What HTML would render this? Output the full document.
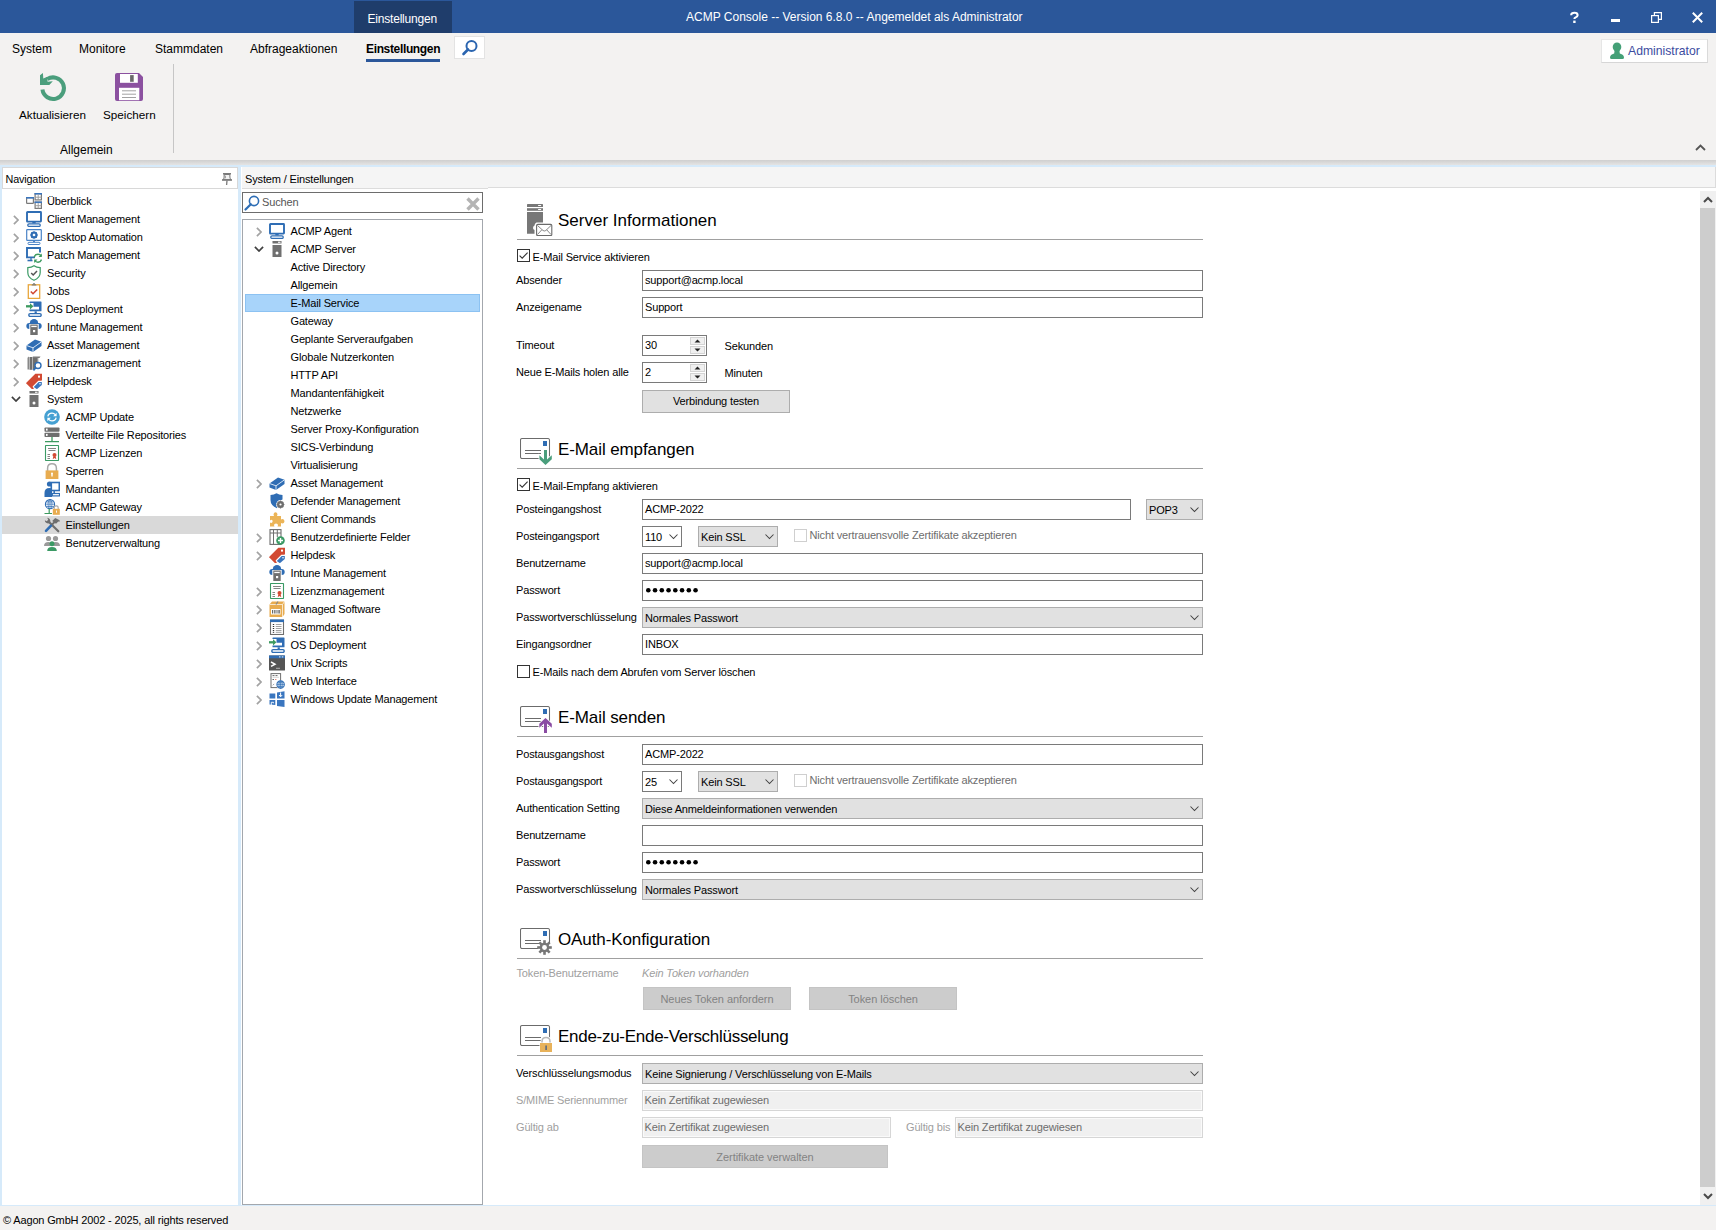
<!DOCTYPE html>
<html><head><meta charset="utf-8">
<style>
*{box-sizing:border-box;margin:0;padding:0}
html,body{width:1716px;height:1230px;overflow:hidden;background:#f3f2f1;font-family:"Liberation Sans",sans-serif;color:#000}
.a{position:absolute}
.t{position:absolute;font-size:11px;line-height:14px;white-space:nowrap;letter-spacing:-0.15px}
.m{position:absolute;font-size:12px;line-height:15px;white-space:nowrap}
.h{position:absolute;font-size:17px;line-height:20px;white-space:nowrap;letter-spacing:-0.1px}
.box{position:absolute;background:#fff;border:1px solid #7a7a7a}
.cmb{position:absolute;background:#e1e1e1;border:1px solid #adadad}
.ro{position:absolute;background:#f0f0f0;border:1px solid #d6d6d6;box-shadow:inset 0 0 0 1px #fafafa}
.btn{position:absolute;background:#e1e1e1;border:1px solid #adadad;text-align:center;font-size:11px;line-height:21px;letter-spacing:-0.15px}
.dbtn{position:absolute;background:#cccccc;border:1px solid #c4c4c4;text-align:center;font-size:11px;line-height:22px;color:#838383;letter-spacing:-0.05px}
.cb{position:absolute;width:13px;height:13px;border:1px solid #333;background:#fff}
.line{position:absolute;height:1px;background:#a0a0a0}
.chev{position:absolute;width:6px;height:6px;border-right:1px solid #404040;border-bottom:1px solid #404040;transform:rotate(45deg)}
svg{position:absolute;overflow:visible}
</style></head>
<body>
<svg width="0" height="0" style="position:absolute">
<defs>
<symbol id="i-overview" viewBox="0 0 16 16"><rect x="0.6" y="4.6" width="6.8" height="5.8" rx="0.6" fill="#fff" stroke="#7a7a7a" stroke-width="1.2"/><rect x="0" y="4" width="8" height="1.6" fill="#3a75bd"/><rect x="9.1" y="0.6" width="6.3" height="6.3" fill="#fff" stroke="#7a7a7a" stroke-width="1.2"/><rect x="8.5" y="0" width="7.5" height="1.6" fill="#3a75bd"/><path d="M12.2 1.5V7M9 4.2H15.5" stroke="#999" stroke-width="0.9"/><rect x="9.1" y="9.1" width="6.3" height="6.3" fill="#fff" stroke="#7a7a7a" stroke-width="1.2"/><rect x="8.5" y="8.5" width="7.5" height="1.6" fill="#3a75bd"/><path d="M12.2 10V15.5M9 12.7H15.5" stroke="#999" stroke-width="0.9"/></symbol>
<symbol id="i-monitor" viewBox="0 0 16 16"><rect x="1" y="1" width="14" height="9.6" rx="0.5" fill="none" stroke="#2f6db4" stroke-width="1.9"/><rect x="6.3" y="11" width="3.4" height="1.4" fill="#2f6db4"/><rect x="1.8" y="12.9" width="12.4" height="2.5" rx="1.2" fill="#fff" stroke="#2f6db4" stroke-width="1.3"/></symbol>
<symbol id="i-mongear" viewBox="0 0 16 16"><rect x="0.7" y="0.7" width="14.6" height="10.6" rx="0.6" fill="none" stroke="#4a83c6" stroke-width="1.2"/><circle cx="8" cy="6" r="2.6" fill="none" stroke="#2f6db4" stroke-width="1.8"/><path d="M8 2.2V9.8M4.2 6H11.8M5.3 3.3L10.7 8.7M10.7 3.3L5.3 8.7" stroke="#2f6db4" stroke-width="1.1"/><circle cx="8" cy="6" r="1.2" fill="#fff"/><rect x="7" y="11.5" width="2" height="1.5" fill="#4a83c6"/><rect x="2" y="13.3" width="12" height="2.2" rx="1" fill="none" stroke="#4a83c6" stroke-width="1"/></symbol>
<symbol id="i-monsync" viewBox="0 0 16 16"><path d="M9 10.4H1V1H14V5.5" fill="none" stroke="#2f6db4" stroke-width="1.9"/><path d="M1.5 13.5H6.5" stroke="#2f6db4" stroke-width="1.6"/><path d="M5 10.5V13" stroke="#2f6db4" stroke-width="1.3"/><path d="M8.2 10.3Q8.8 7.3 12 7.3Q14.2 7.3 15.2 9" fill="none" stroke="#3c9a5f" stroke-width="1.4"/><path d="M15.8 6.5V10H12.5Z" fill="#3c9a5f"/><path d="M15.5 12.5Q14.8 15.2 12 15.2Q9.8 15.2 8.8 13.7" fill="none" stroke="#3c9a5f" stroke-width="1.4"/><path d="M8.2 16V12.4H11.5Z" fill="#3c9a5f"/></symbol>
<symbol id="i-shield" viewBox="0 0 16 16"><path d="M8 0.8Q10.5 2.6 14.2 2.6V7.5Q14.2 12.8 8 15.3Q1.8 12.8 1.8 7.5V2.6Q5.5 2.6 8 0.8Z" fill="#fff" stroke="#3b9a65" stroke-width="1.2"/><path d="M5.2 8L7.2 10L11 6" fill="none" stroke="#555" stroke-width="1.5"/></symbol>
<symbol id="i-jobs" viewBox="0 0 16 16"><rect x="2.3" y="1.8" width="11.4" height="13.6" fill="#fff" stroke="#e8a63c" stroke-width="1.3"/><path d="M5.5 2.6H10.5L9.8 1.2H6.2Z" fill="#777"/><path d="M7 0.8H9" stroke="#777" stroke-width="1"/><path d="M4.8 8.5L7 10.7L11.2 6.5" fill="none" stroke="#d24a33" stroke-width="1.6"/></symbol>
<symbol id="i-osdeploy" viewBox="0 0 16 16"><rect x="3.5" y="0.5" width="12" height="9.8" rx="0.6" fill="#2f6db4"/><path d="M2.5 2V8.6H13V5.8H7.5V2Z" fill="#fff"/><rect x="8.6" y="10.3" width="2.2" height="2" fill="#2f6db4"/><rect x="2.8" y="12.6" width="12.4" height="2.8" rx="1.3" fill="#fff" stroke="#2f6db4" stroke-width="1.4"/><path d="M0 5.3H4.5" stroke="#3c9a5f" stroke-width="2.3"/><path d="M4 2.2L7.4 5.3L4 8.4Z" fill="#3c9a5f"/></symbol>
<symbol id="i-intune" viewBox="0 0 16 16"><circle cx="3.3" cy="7" r="3" fill="#2f6db4"/><circle cx="8" cy="4.3" r="4.2" fill="#2f6db4"/><circle cx="12.7" cy="7" r="3" fill="#2f6db4"/><rect x="3.3" y="5" width="9.4" height="11" fill="#fff"/><rect x="4.3" y="5.5" width="7.4" height="10.5" fill="#707070"/><rect x="5.3" y="6.8" width="5.4" height="1.3" fill="#fff"/><rect x="7" y="11" width="2.2" height="2.2" fill="#fff"/></symbol>
<symbol id="i-asset" viewBox="0 0 16 16"><path d="M0.5 8.5L9 2.5L15.5 4.8V9L7 15L0.5 12.6Z" fill="#2f6db4"/><path d="M0.5 8.5L7 10.8L15.5 4.8M7 10.8V15" fill="none" stroke="#e8f0fa" stroke-width="0.9"/></symbol>
<symbol id="i-lizenz" viewBox="0 0 16 16"><path d="M1.5 2.8L3 1.5V14.5H1.5Z" fill="#888"/><rect x="3.5" y="2" width="3" height="12.8" fill="#6e6e6e"/><path d="M6.8 1.5H14.5L13.5 3H6.8Z" fill="#7a7a7a"/><rect x="7" y="3" width="4.5" height="11" fill="#6e6e6e"/><path d="M11.8 3V8" stroke="#888" stroke-width="1"/><circle cx="12" cy="10.5" r="3" fill="#fff" stroke="#2f6db4" stroke-width="1.4"/><path d="M9.8 12.7L7.4 15.3" stroke="#2f6db4" stroke-width="1.8"/></symbol>
<symbol id="i-helpdesk" viewBox="0 0 16 16"><path d="M0.3 9.8L9.3 0.8H16V7.2L7.2 16H5.8L0.3 10.6Z" fill="#d24a33"/><rect x="12" y="2.6" width="2" height="2" fill="#fff"/><path d="M6.6 13.4L12.3 7.7H16.6V12.2L11 17L7 14.6Z" fill="#fff"/><path d="M7.8 13.9L12.7 9H15.8V11.9L10.9 16.2Z" fill="#3a75bd"/><circle cx="14" cy="10.7" r="0.8" fill="#fff"/></symbol>
<symbol id="i-server" viewBox="0 0 16 16"><rect x="3.5" y="0" width="9" height="2.6" rx="0.4" fill="#707070"/><rect x="9" y="0.7" width="2.5" height="1.1" fill="#fff"/><rect x="3.5" y="4" width="9" height="12" fill="#707070"/><circle cx="8" cy="12" r="1.5" fill="#fff"/></symbol>
<symbol id="i-update" viewBox="0 0 16 16"><circle cx="8" cy="8" r="7.8" fill="#45a0d2"/><path d="M3.9 7.4Q4.5 4.2 8 4.2Q10 4.2 11.2 5.6" fill="none" stroke="#fff" stroke-width="1.3"/><path d="M12.6 3.8V7.2H9.2Z" fill="#fff"/><path d="M12.1 8.6Q11.5 11.8 8 11.8Q6 11.8 4.8 10.4" fill="none" stroke="#fff" stroke-width="1.3"/><path d="M3.4 12.2V8.8H6.8Z" fill="#fff"/></symbol>
<symbol id="i-repo" viewBox="0 0 16 16"><rect x="0.5" y="0.5" width="15" height="4.2" rx="0.8" fill="#6e6e6e"/><rect x="2" y="1.6" width="1.6" height="2" fill="#fff"/><rect x="0.5" y="5.8" width="15" height="4.2" rx="0.8" fill="#6e6e6e"/><rect x="2" y="6.9" width="1.6" height="2" fill="#fff"/><path d="M8 10V14M1 14.6H15" stroke="#3c9a5f" stroke-width="1.3"/></symbol>
<symbol id="i-cert" viewBox="0 0 16 16"><rect x="1.5" y="0.5" width="13" height="15" rx="0.6" fill="#fff" stroke="#3b9a65" stroke-width="1.1"/><path d="M4 3.5H12M4.5 5.5H11.5M3.5 9.5H6M3.5 11.5H6M3.5 13.5H6" stroke="#777" stroke-width="0.9"/><circle cx="10.5" cy="10" r="2" fill="#d24a33"/><path d="M9.3 11.5L8.7 14.2L10.5 13L12.3 14.2L11.7 11.5" fill="#d24a33"/></symbol>
<symbol id="i-lock" viewBox="0 0 16 16"><path d="M3.6 8V5.2Q3.6 0.8 8 0.8Q12.4 0.8 12.4 5.2V8" fill="none" stroke="#a8a8a8" stroke-width="1.5"/><rect x="1.6" y="7.4" width="12.8" height="8.6" fill="#e8ac50"/><rect x="7.3" y="10.5" width="1.4" height="3" fill="#fff"/><circle cx="8" cy="10.5" r="1" fill="#fff"/></symbol>
<symbol id="i-mandant" viewBox="0 0 16 16"><circle cx="5.5" cy="3" r="2.6" fill="#2f6db4"/><path d="M0.5 16V12Q0.5 7 5.5 7Q7.5 7 8 8V16Z" fill="#2f6db4"/><rect x="7.3" y="1.5" width="8" height="8" fill="#fff" stroke="#2f6db4" stroke-width="1.6"/><path d="M10.2 9.5V12" stroke="#2f6db4" stroke-width="1.5"/><rect x="8.3" y="12.5" width="7.2" height="2.4" fill="#fff" stroke="#2f6db4" stroke-width="1.2"/></symbol>
<symbol id="i-gateway" viewBox="0 0 16 16"><circle cx="6" cy="5.2" r="4.6" fill="#fff" stroke="#2f6db4" stroke-width="1.1"/><path d="M1.4 5.2H10.6M6 0.6V9.8M2.2 2.9H9.8M2.2 7.5H9.8" stroke="#2f6db4" stroke-width="0.7"/><ellipse cx="6" cy="5.2" rx="2" ry="4.6" fill="none" stroke="#2f6db4" stroke-width="0.7"/><path d="M5.2 9.8V14.5M0.5 14.5H8" stroke="#3c9a5f" stroke-width="1.2"/><path d="M10.2 10V8.8Q10.2 6.9 12.2 6.9Q14.2 6.9 14.2 8.8V10" fill="none" stroke="#a8a8a8" stroke-width="1.1"/><rect x="8.8" y="9.8" width="7" height="6" fill="#e8ac50"/><rect x="12" y="11.5" width="0.9" height="2.2" fill="#fff"/></symbol>
<symbol id="i-tools" viewBox="0 0 16 16"><path d="M4.5 4.5L14.3 14.3" stroke="#6e6e6e" stroke-width="2.2" stroke-linecap="round"/><path d="M0.8 3.2A3.2 3.2 0 0 0 5.8 5.8A3.2 3.2 0 0 0 3.2 0.8L4.2 2.8L2.8 4.2Z" fill="#6e6e6e"/><path d="M8.2 4L11.2 1L15.6 3.2V4.8L14.3 4.6L12 6.8Z" fill="#6e6e6e"/><path d="M11 4.6L6.8 8.8" stroke="#6e6e6e" stroke-width="2"/><path d="M6.8 8.8L2 13.8" stroke="#2f6db4" stroke-width="2.6" stroke-linecap="round"/></symbol>
<symbol id="i-users" viewBox="0 0 16 16"><circle cx="4.5" cy="3.5" r="2.6" fill="#9a9a9a"/><path d="M0 11Q0 7 4.5 7Q7 7 8 8.5L6 11Z" fill="#9a9a9a"/><circle cx="11.5" cy="3.5" r="2.6" fill="#9a9a9a"/><path d="M16 11Q16 7 11.5 7Q9 7 8 8.5L10 11Z" fill="#9a9a9a"/><circle cx="8" cy="8.8" r="2.5" fill="#3b9a65"/><path d="M3.2 16Q3.2 12 8 12Q12.8 12 12.8 16Z" fill="#3b9a65"/></symbol>
<symbol id="i-defender" viewBox="0 0 16 16"><path d="M7.5 0.3Q10 2 13.5 2V6.5Q10 7.5 8.5 12Q9 14 8 15.2Q1.5 12.5 1.5 7V2Q5 2 7.5 0.3Z" fill="#2f6db4"/><circle cx="11.5" cy="11.5" r="4.4" fill="#fff"/><circle cx="11.5" cy="11.5" r="2.6" fill="none" stroke="#6e6e6e" stroke-width="1.8"/><path d="M11.5 7.6V15.4M7.6 11.5H15.4M8.8 8.8L14.2 14.2M14.2 8.8L8.8 14.2" stroke="#6e6e6e" stroke-width="1.2"/><circle cx="11.5" cy="11.5" r="1.1" fill="#fff"/></symbol>
<symbol id="i-puzzle" viewBox="0 0 16 16"><path d="M1 5H5Q4 3.5 5 2Q6.5 0.5 8 2Q9 3.5 8 5H12V8.5Q13.5 7.5 15 8.8Q16 10.5 15 11.8Q13.5 13 12 12V15.5H8.5Q9.5 14 8.5 13Q7 11.8 5.5 13Q4.5 14 5.5 15.5H1V11.5Q2.5 12.5 3.5 11Q4 9.5 3 9Q2 8.5 1 9.5Z" fill="#ebb457"/></symbol>
<symbol id="i-fields" viewBox="0 0 16 16"><rect x="1" y="0.6" width="11" height="14.8" fill="#fff" stroke="#6e6e6e" stroke-width="1.1"/><path d="M1 4H12M4.5 0.6V15.4M8.3 0.6V8" stroke="#6e6e6e" stroke-width="1"/><circle cx="11.5" cy="11.5" r="4.3" fill="#3b9a65"/><path d="M11.5 9V14M9 11.5H14" stroke="#fff" stroke-width="1.4"/></symbol>
<symbol id="i-package" viewBox="0 0 16 16"><path d="M0.5 3.5L3 0.5H15.5V13L13.5 16H0.5Z" fill="#e8ac50"/><path d="M13.5 3.5V16M0.5 3.5H13.5L15.5 0.5" fill="none" stroke="#fff" stroke-width="0.7"/><rect x="2" y="8" width="9.5" height="5.5" fill="#fff"/><path d="M3.5 9V12.5M5.3 9V12.5M7 9V12.5M9 9V12.5M10.3 9V12.5" stroke="#555" stroke-width="0.9"/><path d="M7 3.5L9 0.5" stroke="#888" stroke-width="1.2"/></symbol>
<symbol id="i-stamm" viewBox="0 0 16 16"><rect x="1.5" y="1.2" width="13" height="14.3" fill="#fff" stroke="#6e6e6e" stroke-width="1.1"/><rect x="1" y="0.5" width="14" height="2.6" fill="#2f6db4"/><path d="M3.8 5.5H5.2M3.8 7.5H5.2M3.8 9.5H5.2M3.8 11.5H5.2M3.8 13.3H5.2" stroke="#333" stroke-width="1"/><path d="M6.8 5.5H12.5M6.8 7.5H12.5M6.8 9.5H12.5M6.8 11.5H12.5M6.8 13.3H12.5" stroke="#999" stroke-width="0.9"/></symbol>
<symbol id="i-terminal" viewBox="0 0 16 16"><rect x="0" y="0.5" width="16" height="15" rx="0.6" fill="#555"/><rect x="0" y="0.5" width="16" height="2.8" fill="#2f6db4"/><path d="M10 1.9H11.5M12.8 1.9H14.3" stroke="#fff" stroke-width="0.9"/><path d="M2 7L6 9.2L2 11.4" fill="none" stroke="#fff" stroke-width="1.5"/><path d="M7 13.3H11" stroke="#aaa" stroke-width="1.1"/></symbol>
<symbol id="i-web" viewBox="0 0 16 16"><rect x="2" y="0.6" width="9.6" height="14" fill="#fff" stroke="#6e6e6e" stroke-width="1"/><path d="M3.5 2.6H5.5M6.5 2.6H8.5M3.5 6.5H5" stroke="#555" stroke-width="0.9"/><path d="M3.5 4.3H10" stroke="#bbb" stroke-width="0.6"/><path d="M6.3 6.5H7.3" stroke="#d24a33" stroke-width="0.9"/><path d="M3.8 12.3L5.2 10.9" stroke="#777" stroke-width="0.7"/><circle cx="11.6" cy="11.6" r="4.4" fill="#fff"/><circle cx="11.6" cy="11.6" r="3.7" fill="#fff" stroke="#2f6db4" stroke-width="1.1"/><path d="M8 11.6H15.2M11.6 8V15.2M8.6 9.8H14.6M8.6 13.4H14.6" stroke="#2f6db4" stroke-width="0.75"/><ellipse cx="11.6" cy="11.6" rx="1.7" ry="3.7" fill="none" stroke="#2f6db4" stroke-width="0.75"/></symbol>
<symbol id="i-windows" viewBox="0 0 16 16"><path d="M0.5 2.6L6.3 2.5V7.5H0.5Z" fill="#3a76bf"/><path d="M8 1.5L15.5 0.3V7.5H8Z" fill="#3a76bf"/><path d="M0.5 9H6.3V14L0.5 13.5Z" fill="#3a76bf"/><path d="M8 9H15.5V16L8 15Z" fill="#3a76bf"/><path d="M11.6 1.5V5.5M10 4L11.6 5.8L13.2 4" fill="none" stroke="#fff" stroke-width="1"/><path d="M2.3 14V11.3H4.5V12.3" fill="none" stroke="#fff" stroke-width="0.9"/></symbol>
<symbol id="chev-r" viewBox="0 0 6 10"><path d="M0.9 0.9L5 5L0.9 9.1" fill="none" stroke="#a3a3a3" stroke-width="1.7"/></symbol>
<symbol id="chev-d" viewBox="0 0 10 6"><path d="M0.9 0.9L5 5L9.1 0.9" fill="none" stroke="#404040" stroke-width="1.7"/></symbol>

<symbol id="s-server" viewBox="0 0 26 32"><rect x="0" y="0" width="16" height="3" rx="0.6" fill="#777"/><rect x="11" y="1" width="3.2" height="1.1" rx="0.5" fill="#fff"/><rect x="0" y="4.2" width="16" height="2.6" fill="#777"/><rect x="11" y="5" width="3.2" height="1" rx="0.5" fill="#fff"/><path d="M0 8H16V18.5H9.5Q7.5 19.5 7.5 21.5Q6 22 6 24Q6 25.5 7.5 26V29.8H0Z" fill="#777"/><rect x="9.6" y="20.4" width="15.2" height="11.2" rx="1.2" fill="#fff" stroke="#6a6a6a" stroke-width="1.1"/><path d="M10.5 21.5L16 26.5Q17.3 27.5 18.8 26.5L24 21.5M10.5 30.5L14.8 25.8M24 30.5L19.7 25.8" fill="none" stroke="#6a6a6a" stroke-width="0.8"/></symbol>
<symbol id="s-env" viewBox="0 0 32 28"><rect x="0.5" y="0.5" width="29" height="20" rx="1.6" fill="#fff" stroke="#6b6b6b" stroke-width="1.05"/><rect x="23" y="3" width="4" height="5" fill="#2f6db4"/><path d="M5 12.5H21M5 15.5H21" stroke="#6b6b6b" stroke-width="1.05"/></symbol>
</defs></svg>

<!-- TITLE BAR -->
<div class="a" style="left:0;top:0;width:1716px;height:33px;background:#2b579a"></div>
<div class="a" style="left:354px;top:1px;width:98px;height:32px;background:#1f3d6b"></div>
<div class="m" style="left:367.5px;top:12px;color:#fff;font-size:12px;letter-spacing:-0.2px">Einstellungen</div>
<div class="m" style="left:686px;top:9.5px;color:#fff">ACMP Console -- Version 6.8.0 -- Angemeldet als Administrator</div>
<!-- window controls -->
<svg style="left:1570px;top:12px" width="9" height="11" viewBox="0 0 9 11"><path d="M1.2 3.2Q1.2 0.8 4.4 0.8Q7.6 0.8 7.6 3.2Q7.6 4.6 5.6 5.4Q4.4 5.9 4.4 7" fill="none" stroke="#fff" stroke-width="2.1"/><rect x="3.2" y="8.6" width="2.4" height="2.4" fill="#fff"/></svg>
<div class="a" style="left:1611px;top:18.5px;width:9px;height:3px;background:#fff"></div>
<svg style="left:1651px;top:12px" width="11" height="11" viewBox="0 0 11 11"><rect x="0.6" y="3.6" width="6.8" height="6.8" fill="none" stroke="#fff" stroke-width="1.2"/><path d="M3.4 3.4V0.6H10.4V7.4H7.6" fill="none" stroke="#fff" stroke-width="1.2"/></svg>
<svg style="left:1692px;top:12px" width="11" height="11" viewBox="0 0 11 11"><path d="M0.8 0.8L10.2 10.2M10.2 0.8L0.8 10.2" stroke="#fff" stroke-width="2"/></svg>

<!-- MENU -->
<div class="m" style="left:12px;top:41.5px">System</div>
<div class="m" style="left:79px;top:41.5px">Monitore</div>
<div class="m" style="left:155px;top:41.5px">Stammdaten</div>
<div class="m" style="left:250px;top:41.5px">Abfrageaktionen</div>
<div class="m" style="left:366px;top:41.5px;font-weight:bold;letter-spacing:-0.35px">Einstellungen</div>
<div class="a" style="left:366px;top:59px;width:74px;height:3px;background:#2b579a"></div>
<div class="a" style="left:454px;top:36px;width:31px;height:23px;background:#fff;border:1px solid #e3e3e3"></div>
<svg style="left:461px;top:39px" width="18" height="18"><circle cx="10.5" cy="7" r="5" fill="none" stroke="#2b65b0" stroke-width="2"/><path d="M7 10.5L2.5 15" stroke="#2b65b0" stroke-width="2.6" stroke-linecap="round"/></svg>
<!-- Administrator -->
<div class="a" style="left:1601px;top:39px;width:107px;height:24px;background:#fff;border:1px solid #e6e6e6;border-bottom-color:#d6d6d6;border-right-color:#dadada"></div>
<svg style="left:1608px;top:42px" width="18" height="18"><ellipse cx="9" cy="5" rx="4.3" ry="4.6" fill="#44a077"/><path d="M6.5 9H11.5L11.8 11.5Q16 12.5 16 15.5Q16 17 14.5 17H3.5Q2 17 2 15.5Q2 12.5 6.2 11.5Z" fill="#44a077"/></svg>
<div class="m" style="left:1628px;top:43.5px;color:#3c4ba0;font-size:12.2px">Administrator</div>

<!-- RIBBON -->
<svg style="left:38px;top:72px" width="30" height="30" viewBox="0 0 30 30"><path d="M4.45 17.6A10.8 10.8 0 1 0 9.2 7.2" fill="none" stroke="#4a9e7c" stroke-width="4"/><path d="M2 3.3L4.9 0.9L5.3 6.5L9.3 4.7L9.6 9.7L14.8 9.2L11.3 13H2Z" fill="#4a9e7c"/></svg>
<svg style="left:115px;top:73px" width="28" height="28" viewBox="0 0 28 28"><path d="M0 2Q0 0 2 0H24L28 4V26Q28 28 26 28H2Q0 28 0 26Z" fill="#8b51a0"/><rect x="5" y="1" width="17.8" height="8.8" fill="#fff"/><rect x="15.1" y="2.1" width="3.6" height="6.7" fill="#6a6a6a"/><rect x="4" y="14.8" width="20.3" height="12.4" fill="#fff"/><path d="M7 17.8H21M7 21.2H21M7 24.5H21" stroke="#8a8a8a" stroke-width="0.8"/></svg>
<div class="t" style="left:19px;top:107.5px;font-size:11.7px;letter-spacing:0">Aktualisieren</div>
<div class="t" style="left:103px;top:107.5px;font-size:11.7px;letter-spacing:0">Speichern</div>
<div class="t" style="left:60px;top:142.5px;font-size:12px;letter-spacing:0">Allgemein</div>
<div class="a" style="left:173px;top:64px;width:1px;height:89px;background:#c6c6c6"></div>
<svg style="left:1695px;top:143px" width="11" height="8"><path d="M1 7L5.5 2.5L10 7" fill="none" stroke="#555" stroke-width="1.8"/></svg>
<!-- ribbon shadow -->
<div class="a" style="left:0;top:160px;width:1716px;height:5px;background:linear-gradient(#cfcfcf,#e4e4e4)"></div>
<div class="a" style="left:0;top:165px;width:1716px;height:1041px;background:#d6eafa"></div>

<!-- NAV PANEL -->
<div class="a" style="left:2px;top:167px;width:236px;height:1038px;background:#fff"></div>
<div class="a" style="left:2px;top:167px;width:236px;height:22px;background:#fff;border:1px solid #d8d8d8"></div>
<div class="t" style="left:5.5px;top:172px;font-size:10.8px">Navigation</div>
<svg style="left:221px;top:172px" width="12" height="14" viewBox="0 0 12 14"><path d="M3.2 2.5H8.8L9 6.2L10.3 7.6H1.7L3 6.2Z" fill="#f2f2f2" stroke="#7a7a7a" stroke-width="1"/><rect x="2" y="1" width="8" height="1.6" fill="#7a7a7a"/><rect x="1" y="7.3" width="10" height="1.5" fill="#7a7a7a"/><path d="M4 3.5Q5 5 4 6.5" fill="none" stroke="#888" stroke-width="0.9"/><path d="M6 8.5L5.6 13" stroke="#7a7a7a" stroke-width="1.3"/></svg>

<div class="a" style="left:2px;top:516px;width:236px;height:18px;background:#d9d9d9"></div>
<svg style="left:26px;top:193px" width="16" height="16"><use href="#i-overview"/></svg>
<div class="t" style="left:47px;top:194px">Überblick</div>
<svg style="left:13px;top:215px" width="6" height="10"><use href="#chev-r"/></svg>
<svg style="left:26px;top:211px" width="16" height="16"><use href="#i-monitor"/></svg>
<div class="t" style="left:47px;top:212px">Client Management</div>
<svg style="left:13px;top:233px" width="6" height="10"><use href="#chev-r"/></svg>
<svg style="left:26px;top:229px" width="16" height="16"><use href="#i-mongear"/></svg>
<div class="t" style="left:47px;top:230px">Desktop Automation</div>
<svg style="left:13px;top:251px" width="6" height="10"><use href="#chev-r"/></svg>
<svg style="left:26px;top:247px" width="16" height="16"><use href="#i-monsync"/></svg>
<div class="t" style="left:47px;top:248px">Patch Management</div>
<svg style="left:13px;top:269px" width="6" height="10"><use href="#chev-r"/></svg>
<svg style="left:26px;top:265px" width="16" height="16"><use href="#i-shield"/></svg>
<div class="t" style="left:47px;top:266px">Security</div>
<svg style="left:13px;top:287px" width="6" height="10"><use href="#chev-r"/></svg>
<svg style="left:26px;top:283px" width="16" height="16"><use href="#i-jobs"/></svg>
<div class="t" style="left:47px;top:284px">Jobs</div>
<svg style="left:13px;top:305px" width="6" height="10"><use href="#chev-r"/></svg>
<svg style="left:26px;top:301px" width="16" height="16"><use href="#i-osdeploy"/></svg>
<div class="t" style="left:47px;top:302px">OS Deployment</div>
<svg style="left:13px;top:323px" width="6" height="10"><use href="#chev-r"/></svg>
<svg style="left:26px;top:319px" width="16" height="16"><use href="#i-intune"/></svg>
<div class="t" style="left:47px;top:320px">Intune Management</div>
<svg style="left:13px;top:341px" width="6" height="10"><use href="#chev-r"/></svg>
<svg style="left:26px;top:337px" width="16" height="16"><use href="#i-asset"/></svg>
<div class="t" style="left:47px;top:338px">Asset Management</div>
<svg style="left:13px;top:359px" width="6" height="10"><use href="#chev-r"/></svg>
<svg style="left:26px;top:355px" width="16" height="16"><use href="#i-lizenz"/></svg>
<div class="t" style="left:47px;top:356px">Lizenzmanagement</div>
<svg style="left:13px;top:377px" width="6" height="10"><use href="#chev-r"/></svg>
<svg style="left:26px;top:373px" width="16" height="16"><use href="#i-helpdesk"/></svg>
<div class="t" style="left:47px;top:374px">Helpdesk</div>
<svg style="left:11px;top:396px" width="10" height="6"><use href="#chev-d"/></svg>
<svg style="left:26px;top:391px" width="16" height="16"><use href="#i-server"/></svg>
<div class="t" style="left:47px;top:392px">System</div>
<svg style="left:44px;top:409px" width="16" height="16"><use href="#i-update"/></svg>
<div class="t" style="left:65.5px;top:410px">ACMP Update</div>
<svg style="left:44px;top:427px" width="16" height="16"><use href="#i-repo"/></svg>
<div class="t" style="left:65.5px;top:428px">Verteilte File Repositories</div>
<svg style="left:44px;top:445px" width="16" height="16"><use href="#i-cert"/></svg>
<div class="t" style="left:65.5px;top:446px">ACMP Lizenzen</div>
<svg style="left:44px;top:463px" width="16" height="16"><use href="#i-lock"/></svg>
<div class="t" style="left:65.5px;top:464px">Sperren</div>
<svg style="left:44px;top:481px" width="16" height="16"><use href="#i-mandant"/></svg>
<div class="t" style="left:65.5px;top:482px">Mandanten</div>
<svg style="left:44px;top:499px" width="16" height="16"><use href="#i-gateway"/></svg>
<div class="t" style="left:65.5px;top:500px">ACMP Gateway</div>
<svg style="left:44px;top:517px" width="16" height="16"><use href="#i-tools"/></svg>
<div class="t" style="left:65.5px;top:518px">Einstellungen</div>
<svg style="left:44px;top:535px" width="16" height="16"><use href="#i-users"/></svg>
<div class="t" style="left:65.5px;top:536px">Benutzerverwaltung</div>

<!-- MIDDLE PANEL -->
<div class="a" style="left:241px;top:167px;width:1475px;height:1038px;background:#fff"></div>
<div class="a" style="left:242px;top:167px;width:1474px;height:21px;background:#f5f5f5;border-bottom:1px solid #dcdcdc;border-right:1px solid #dcdcdc"></div>
<div class="t" style="left:245px;top:172px;font-size:11px">System / Einstellungen</div>
<div class="a" style="left:242px;top:187px;width:246px;height:1px;background:#f5f5f5"></div>
<div class="a" style="left:242px;top:188px;width:246px;height:1px;background:#dcdcdc"></div>
<div class="a" style="left:242px;top:192px;width:241px;height:21px;background:#fff;border:1px solid #6d6d6d"></div>
<svg style="left:244px;top:195px" width="16" height="16"><circle cx="10" cy="6" r="4.6" fill="none" stroke="#2d6db5" stroke-width="1.6"/><path d="M6.8 9.2L1.5 14.5" stroke="#2d6db5" stroke-width="2.2" stroke-linecap="round"/></svg>
<div class="t" style="left:262px;top:195px;color:#555">Suchen</div>
<svg style="left:466px;top:197px" width="14" height="14"><path d="M1.5 1.5L12.5 12.5M12.5 1.5L1.5 12.5" stroke="#b4b4b4" stroke-width="3.4"/></svg>
<div class="a" style="left:242px;top:219px;width:241px;height:986px;background:#fff;border:1px solid #a3a7ad;border-bottom:none"></div>
<div class="a" style="left:242px;top:1204px;width:241px;height:1px;background:#a3a7ad"></div>
<div class="a" style="left:245px;top:294px;width:235px;height:18px;background:#a8d4fa;border:1px solid #8cc2f2"></div>

<svg style="left:256px;top:227px" width="6" height="10"><use href="#chev-r"/></svg>
<svg style="left:269px;top:223px" width="16" height="16"><use href="#i-monitor"/></svg>
<div class="t" style="left:290.5px;top:224px">ACMP Agent</div>
<svg style="left:254px;top:246px" width="10" height="6"><use href="#chev-d"/></svg>
<svg style="left:269px;top:241px" width="16" height="16"><use href="#i-server"/></svg>
<div class="t" style="left:290.5px;top:242px">ACMP Server</div>
<div class="t" style="left:290.5px;top:260px">Active Directory</div>
<div class="t" style="left:290.5px;top:278px">Allgemein</div>
<div class="t" style="left:290.5px;top:296px">E-Mail Service</div>
<div class="t" style="left:290.5px;top:314px">Gateway</div>
<div class="t" style="left:290.5px;top:332px">Geplante Serveraufgaben</div>
<div class="t" style="left:290.5px;top:350px">Globale Nutzerkonten</div>
<div class="t" style="left:290.5px;top:368px">HTTP API</div>
<div class="t" style="left:290.5px;top:386px">Mandantenfähigkeit</div>
<div class="t" style="left:290.5px;top:404px">Netzwerke</div>
<div class="t" style="left:290.5px;top:422px">Server Proxy-Konfiguration</div>
<div class="t" style="left:290.5px;top:440px">SICS-Verbindung</div>
<div class="t" style="left:290.5px;top:458px">Virtualisierung</div>
<svg style="left:256px;top:479px" width="6" height="10"><use href="#chev-r"/></svg>
<svg style="left:269px;top:475px" width="16" height="16"><use href="#i-asset"/></svg>
<div class="t" style="left:290.5px;top:476px">Asset Management</div>
<svg style="left:269px;top:493px" width="16" height="16"><use href="#i-defender"/></svg>
<div class="t" style="left:290.5px;top:494px">Defender Management</div>
<svg style="left:269px;top:511px" width="16" height="16"><use href="#i-puzzle"/></svg>
<div class="t" style="left:290.5px;top:512px">Client Commands</div>
<svg style="left:256px;top:533px" width="6" height="10"><use href="#chev-r"/></svg>
<svg style="left:269px;top:529px" width="16" height="16"><use href="#i-fields"/></svg>
<div class="t" style="left:290.5px;top:530px">Benutzerdefinierte Felder</div>
<svg style="left:256px;top:551px" width="6" height="10"><use href="#chev-r"/></svg>
<svg style="left:269px;top:547px" width="16" height="16"><use href="#i-helpdesk"/></svg>
<div class="t" style="left:290.5px;top:548px">Helpdesk</div>
<svg style="left:269px;top:565px" width="16" height="16"><use href="#i-intune"/></svg>
<div class="t" style="left:290.5px;top:566px">Intune Management</div>
<svg style="left:256px;top:587px" width="6" height="10"><use href="#chev-r"/></svg>
<svg style="left:269px;top:583px" width="16" height="16"><use href="#i-cert"/></svg>
<div class="t" style="left:290.5px;top:584px">Lizenzmanagement</div>
<svg style="left:256px;top:605px" width="6" height="10"><use href="#chev-r"/></svg>
<svg style="left:269px;top:601px" width="16" height="16"><use href="#i-package"/></svg>
<div class="t" style="left:290.5px;top:602px">Managed Software</div>
<svg style="left:256px;top:623px" width="6" height="10"><use href="#chev-r"/></svg>
<svg style="left:269px;top:619px" width="16" height="16"><use href="#i-stamm"/></svg>
<div class="t" style="left:290.5px;top:620px">Stammdaten</div>
<svg style="left:256px;top:641px" width="6" height="10"><use href="#chev-r"/></svg>
<svg style="left:269px;top:637px" width="16" height="16"><use href="#i-osdeploy"/></svg>
<div class="t" style="left:290.5px;top:638px">OS Deployment</div>
<svg style="left:256px;top:659px" width="6" height="10"><use href="#chev-r"/></svg>
<svg style="left:269px;top:655px" width="16" height="16"><use href="#i-terminal"/></svg>
<div class="t" style="left:290.5px;top:656px">Unix Scripts</div>
<svg style="left:256px;top:677px" width="6" height="10"><use href="#chev-r"/></svg>
<svg style="left:269px;top:673px" width="16" height="16"><use href="#i-web"/></svg>
<div class="t" style="left:290.5px;top:674px">Web Interface</div>
<svg style="left:256px;top:695px" width="6" height="10"><use href="#chev-r"/></svg>
<svg style="left:269px;top:691px" width="16" height="16"><use href="#i-windows"/></svg>
<div class="t" style="left:290.5px;top:692px">Windows Update Management</div>

<!-- SCROLLBAR -->
<div class="a" style="left:1700px;top:191px;width:16px;height:1014px;background:#f0f0f0"></div>
<div class="a" style="left:1700px;top:208px;width:15px;height:979px;background:#cdcdcd"></div>
<svg style="left:1703px;top:196px" width="10" height="7"><path d="M1 6L5 2L9 6" fill="none" stroke="#4a4a4a" stroke-width="2"/></svg>
<svg style="left:1703px;top:1193px" width="10" height="7"><path d="M1 1L5 5L9 1" fill="none" stroke="#4a4a4a" stroke-width="2"/></svg>

<svg style="left:527px;top:204px" width="26" height="32" viewBox="0 0 26 32"><use href="#s-server"/></svg>
<div class="h" style="left:558px;top:211px;letter-spacing:0">Server Informationen</div>
<div class="line" style="left:517px;top:239px;width:686px"></div>
<div class="cb" style="left:517px;top:249px;border-color:#333"></div>
<svg style="left:517px;top:249px" width="13" height="13"><path d="M2.6 6.6L5.2 9.2L10.6 3.6" fill="none" stroke="#333" stroke-width="1.1"/></svg>
<div class="t" style="left:532.5px;top:249.5px">E-Mail Service aktivieren</div>
<div class="t" style="left:516px;top:272.5px">Absender</div>
<div class="box" style="left:642px;top:270px;width:561px;height:21px"></div>
<div class="t" style="left:645px;top:273px">support@acmp.local</div>
<div class="t" style="left:516px;top:299.5px">Anzeigename</div>
<div class="box" style="left:642px;top:297px;width:561px;height:21px"></div>
<div class="t" style="left:645px;top:300px">Support</div>
<div class="t" style="left:516px;top:337.5px">Timeout</div>
<div class="box" style="left:642px;top:335px;width:65px;height:21px"></div>
<div class="t" style="left:645px;top:338px">30</div>
<div class="t" style="left:516px;top:364.5px">Neue E-Mails holen alle</div>
<div class="box" style="left:642px;top:362px;width:65px;height:21px"></div>
<div class="t" style="left:645px;top:365px">2</div>
<div class="a" style="left:690px;top:337px;width:15px;height:8px;background:#f0f0f0;border:1px solid #d4d4d4"></div>
<div class="a" style="left:690px;top:346px;width:15px;height:8px;background:#f0f0f0;border:1px solid #d4d4d4"></div>
<svg style="left:693px;top:339px" width="9" height="14"><path d="M1.5 3.5L4.5 0.5L7.5 3.5Z M1.5 9.5L4.5 12.5L7.5 9.5Z" fill="#222"/></svg>
<div class="a" style="left:690px;top:364px;width:15px;height:8px;background:#f0f0f0;border:1px solid #d4d4d4"></div>
<div class="a" style="left:690px;top:373px;width:15px;height:8px;background:#f0f0f0;border:1px solid #d4d4d4"></div>
<svg style="left:693px;top:366px" width="9" height="14"><path d="M1.5 3.5L4.5 0.5L7.5 3.5Z M1.5 9.5L4.5 12.5L7.5 9.5Z" fill="#222"/></svg>
<div class="t" style="left:724.5px;top:339px">Sekunden</div>
<div class="t" style="left:724.5px;top:366px">Minuten</div>
<div class="btn" style="left:642px;top:390px;width:148px;height:23px">Verbindung testen</div>
<div class="h" style="left:558px;top:440px">E-Mail empfangen</div>
<div class="line" style="left:517px;top:468px;width:686px"></div>
<svg style="left:520px;top:438px" width="32" height="28" viewBox="0 0 32 28"><use href="#s-env"/><path d="M19.4 17.3L24 21.6V12H27V21.6L31.8 17.3V21.2L25.5 27L19.4 21.2Z" fill="#fff" stroke="#fff" stroke-width="1.6"/><path d="M19.4 17.3L24 21.6V12H27V21.6L31.8 17.3V21.2L25.5 27L19.4 21.2Z" fill="#4a9e7c"/></svg>
<div class="cb" style="left:517px;top:478px;border-color:#333"></div>
<svg style="left:517px;top:478px" width="13" height="13"><path d="M2.6 6.6L5.2 9.2L10.6 3.6" fill="none" stroke="#333" stroke-width="1.1"/></svg>
<div class="t" style="left:532.5px;top:478.5px">E-Mail-Empfang aktivieren</div>
<div class="t" style="left:516px;top:501.5px">Posteingangshost</div>
<div class="box" style="left:642px;top:499px;width:489px;height:21px"></div>
<div class="t" style="left:645px;top:502px">ACMP-2022</div>
<div class="cmb" style="left:1146px;top:499px;width:57px;height:21px"></div>
<div class="t" style="left:1149px;top:502.5px">POP3</div>
<svg style="left:1190px;top:507px" width="9" height="5"><path d="M0.5 0.5L4.5 4.5L8.5 0.5" fill="none" stroke="#404040" stroke-width="1.05"/></svg>
<div class="t" style="left:516px;top:528.5px">Posteingangsport</div>
<div class="box" style="left:642px;top:526px;width:40px;height:21px"></div>
<div class="t" style="left:645px;top:529.5px">110</div>
<svg style="left:669px;top:534px" width="9" height="5"><path d="M0.5 0.5L4.5 4.5L8.5 0.5" fill="none" stroke="#404040" stroke-width="1.05"/></svg>
<div class="cmb" style="left:698px;top:526px;width:80px;height:21px"></div>
<div class="t" style="left:701px;top:529.5px">Kein SSL</div>
<svg style="left:765px;top:534px" width="9" height="5"><path d="M0.5 0.5L4.5 4.5L8.5 0.5" fill="none" stroke="#404040" stroke-width="1.05"/></svg>
<div class="cb" style="left:794px;top:528.5px;border-color:#cfcfcf"></div>
<div class="t" style="left:809.5px;top:528px;color:#6d6d6d">Nicht vertrauensvolle Zertifikate akzeptieren</div>
<div class="t" style="left:516px;top:555.5px">Benutzername</div>
<div class="box" style="left:642px;top:553px;width:561px;height:21px"></div>
<div class="t" style="left:645px;top:556px">support@acmp.local</div>
<div class="t" style="left:516px;top:582.5px">Passwort</div>
<div class="box" style="left:642px;top:580px;width:561px;height:21px"></div>
<svg style="left:645.5px;top:588px" width="60" height="5"><circle cx="2.30" cy="2.3" r="2.3"/><circle cx="9.05" cy="2.3" r="2.3"/><circle cx="15.80" cy="2.3" r="2.3"/><circle cx="22.55" cy="2.3" r="2.3"/><circle cx="29.30" cy="2.3" r="2.3"/><circle cx="36.05" cy="2.3" r="2.3"/><circle cx="42.80" cy="2.3" r="2.3"/><circle cx="49.55" cy="2.3" r="2.3"/></svg>
<div class="t" style="left:516px;top:609.5px">Passwortverschlüsselung</div>
<div class="cmb" style="left:642px;top:607px;width:561px;height:21px"></div>
<div class="t" style="left:645px;top:610.5px">Normales Passwort</div>
<svg style="left:1190px;top:615px" width="9" height="5"><path d="M0.5 0.5L4.5 4.5L8.5 0.5" fill="none" stroke="#404040" stroke-width="1.05"/></svg>
<div class="t" style="left:516px;top:636.5px">Eingangsordner</div>
<div class="box" style="left:642px;top:634px;width:561px;height:21px"></div>
<div class="t" style="left:645px;top:637px">INBOX</div>
<div class="cb" style="left:517px;top:665px;border-color:#333"></div>
<div class="t" style="left:532.5px;top:665px">E-Mails nach dem Abrufen vom Server löschen</div>
<div class="h" style="left:558px;top:708px">E-Mail senden</div>
<div class="line" style="left:517px;top:736px;width:686px"></div>
<svg style="left:520px;top:706px" width="32" height="28" viewBox="0 0 32 28"><use href="#s-env"/><path d="M25.5 12L31.8 17.8V21.7L27 17.6V27H24V17.6L19.3 21.7V17.8Z" fill="#fff" stroke="#fff" stroke-width="1.6"/><path d="M25.5 12L31.8 17.8V21.7L27 17.6V27H24V17.6L19.3 21.7V17.8Z" fill="#8a4ca3"/></svg>
<div class="t" style="left:516px;top:746.5px">Postausgangshost</div>
<div class="box" style="left:642px;top:744px;width:561px;height:21px"></div>
<div class="t" style="left:645px;top:747px">ACMP-2022</div>
<div class="t" style="left:516px;top:773.5px">Postausgangsport</div>
<div class="box" style="left:642px;top:771px;width:40px;height:21px"></div>
<div class="t" style="left:645px;top:774.5px">25</div>
<svg style="left:669px;top:779px" width="9" height="5"><path d="M0.5 0.5L4.5 4.5L8.5 0.5" fill="none" stroke="#404040" stroke-width="1.05"/></svg>
<div class="cmb" style="left:698px;top:771px;width:80px;height:21px"></div>
<div class="t" style="left:701px;top:774.5px">Kein SSL</div>
<svg style="left:765px;top:779px" width="9" height="5"><path d="M0.5 0.5L4.5 4.5L8.5 0.5" fill="none" stroke="#404040" stroke-width="1.05"/></svg>
<div class="cb" style="left:794px;top:773.5px;border-color:#cfcfcf"></div>
<div class="t" style="left:809.5px;top:773px;color:#6d6d6d">Nicht vertrauensvolle Zertifikate akzeptieren</div>
<div class="t" style="left:516px;top:800.5px">Authentication Setting</div>
<div class="cmb" style="left:642px;top:798px;width:561px;height:21px"></div>
<div class="t" style="left:645px;top:801.5px">Diese Anmeldeinformationen verwenden</div>
<svg style="left:1190px;top:806px" width="9" height="5"><path d="M0.5 0.5L4.5 4.5L8.5 0.5" fill="none" stroke="#404040" stroke-width="1.05"/></svg>
<div class="t" style="left:516px;top:827.5px">Benutzername</div>
<div class="box" style="left:642px;top:825px;width:561px;height:21px"></div>
<div class="t" style="left:516px;top:854.5px">Passwort</div>
<div class="box" style="left:642px;top:852px;width:561px;height:21px"></div>
<svg style="left:645.5px;top:860px" width="60" height="5"><circle cx="2.30" cy="2.3" r="2.3"/><circle cx="9.05" cy="2.3" r="2.3"/><circle cx="15.80" cy="2.3" r="2.3"/><circle cx="22.55" cy="2.3" r="2.3"/><circle cx="29.30" cy="2.3" r="2.3"/><circle cx="36.05" cy="2.3" r="2.3"/><circle cx="42.80" cy="2.3" r="2.3"/><circle cx="49.55" cy="2.3" r="2.3"/></svg>
<div class="t" style="left:516px;top:881.5px">Passwortverschlüsselung</div>
<div class="cmb" style="left:642px;top:879px;width:561px;height:21px"></div>
<div class="t" style="left:645px;top:882.5px">Normales Passwort</div>
<svg style="left:1190px;top:887px" width="9" height="5"><path d="M0.5 0.5L4.5 4.5L8.5 0.5" fill="none" stroke="#404040" stroke-width="1.05"/></svg>
<div class="h" style="left:558px;top:930px">OAuth-Konfiguration</div>
<div class="line" style="left:517px;top:958px;width:686px"></div>
<svg style="left:520px;top:928px" width="32" height="28" viewBox="0 0 32 28"><use href="#s-env"/><g transform="translate(24.5 19.5)"><circle r="6.5" fill="#fff"/><rect x="-1.3" y="-7.3" width="2.6" height="3.5" fill="#777" transform="rotate(0)"/><rect x="-1.3" y="-7.3" width="2.6" height="3.5" fill="#777" transform="rotate(45)"/><rect x="-1.3" y="-7.3" width="2.6" height="3.5" fill="#777" transform="rotate(90)"/><rect x="-1.3" y="-7.3" width="2.6" height="3.5" fill="#777" transform="rotate(135)"/><rect x="-1.3" y="-7.3" width="2.6" height="3.5" fill="#777" transform="rotate(180)"/><rect x="-1.3" y="-7.3" width="2.6" height="3.5" fill="#777" transform="rotate(225)"/><rect x="-1.3" y="-7.3" width="2.6" height="3.5" fill="#777" transform="rotate(270)"/><rect x="-1.3" y="-7.3" width="2.6" height="3.5" fill="#777" transform="rotate(315)"/><circle r="4.8" fill="#777"/><circle r="2.4" fill="#fff"/></g></svg>
<div class="t" style="left:516.5px;top:966px;color:#a0a0a0">Token-Benutzername</div>
<div class="t" style="left:642px;top:966px;color:#a0a0a0;font-style:italic">Kein Token vorhanden</div>
<div class="dbtn" style="left:643px;top:987px;width:148px;height:23px">Neues Token anfordern</div>
<div class="dbtn" style="left:809px;top:987px;width:148px;height:23px">Token löschen</div>
<div class="h" style="left:558px;top:1027px;letter-spacing:-0.28px">Ende-zu-Ende-Verschlüsselung</div>
<div class="line" style="left:517px;top:1055px;width:686px"></div>
<svg style="left:520px;top:1025px" width="32" height="28" viewBox="0 0 32 28"><use href="#s-env"/><path d="M22 18.5V16.5Q22 12.5 26 12.5Q30 12.5 30 16.5V18.5" fill="none" stroke="#fff" stroke-width="3"/><path d="M22 18.5V16.5Q22 12.5 26 12.5Q30 12.5 30 16.5V18.5" fill="none" stroke="#b8b8b8" stroke-width="1.5"/><rect x="19.5" y="17.5" width="13" height="10" fill="#fff"/><rect x="20" y="18" width="12" height="9" fill="#e8b25a"/><rect x="25.3" y="20.5" width="1.6" height="4.5" fill="#5a6a80"/></svg>
<div class="t" style="left:516px;top:1065.5px">Verschlüsselungsmodus</div>
<div class="cmb" style="left:642px;top:1063px;width:561px;height:21px"></div>
<div class="t" style="left:645px;top:1066.5px">Keine Signierung / Verschlüsselung von E-Mails</div>
<svg style="left:1190px;top:1071px" width="9" height="5"><path d="M0.5 0.5L4.5 4.5L8.5 0.5" fill="none" stroke="#404040" stroke-width="1.05"/></svg>
<div class="t" style="left:516px;top:1092.5px;color:#a0a0a0">S/MIME Seriennummer</div>
<div class="ro" style="left:642px;top:1090px;width:561px;height:21px"></div>
<div class="t" style="left:644.5px;top:1093px;color:#6d6d6d">Kein Zertifikat zugewiesen</div>
<div class="t" style="left:516px;top:1119.5px;color:#a0a0a0">Gültig ab</div>
<div class="ro" style="left:642px;top:1117px;width:249px;height:21px"></div>
<div class="t" style="left:644.5px;top:1120px;color:#6d6d6d">Kein Zertifikat zugewiesen</div>
<div class="t" style="left:906px;top:1119.5px;color:#a0a0a0">Gültig bis</div>
<div class="ro" style="left:955px;top:1117px;width:248px;height:21px"></div>
<div class="t" style="left:957.5px;top:1120px;color:#6d6d6d">Kein Zertifikat zugewiesen</div>
<div class="dbtn" style="left:642px;top:1145px;width:246px;height:23px">Zertifikate verwalten</div>

<!-- STATUS -->
<div class="t" style="left:3px;top:1213px;font-size:11px">© Aagon GmbH 2002 - 2025, all rights reserved</div>
</body></html>
